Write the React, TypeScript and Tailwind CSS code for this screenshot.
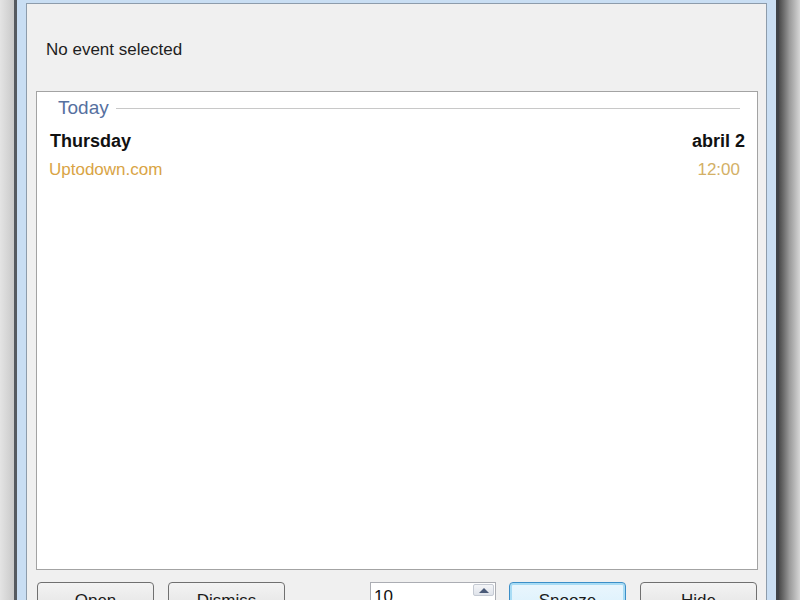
import React from 'react'

const font = { fontFamily: '"Liberation Sans", Arial, sans-serif' }

const Button = ({ label, focused = false, className = '' }: { label: string; focused?: boolean; className?: string }) => (
  <button
    className={
      'relative h-[34px] w-[117px] shrink-0 rounded-[4px] border text-[17px] leading-[20px] text-[#1a1a1a] ' +
      (focused
        ? 'border-[#3c8fc8] shadow-[inset_0_0_0_2px_#a8dcf5] bg-gradient-to-b from-[#eaf6fd] to-[#d9f0fc] '
        : 'border-[#707070] bg-gradient-to-b from-[#f3f3f3] to-[#e2e2e2] ') +
      className
    }
  >
    <span className="absolute left-0 right-0 top-[8px] text-center">{label}</span>
  </button>
)

export default function App() {
  return (
    <div className="flex h-[600px] w-[800px] overflow-hidden" style={font}>
      {/* desktop behind, left */}
      <div className="w-[14px] shrink-0 bg-gradient-to-r from-[#e4e4e4] to-[#c9c9c9]" />

      {/* window frame */}
      <div className="flex w-[765px] shrink-0 flex-col border-x-[3px] border-l-[#555a60] border-r-[#3f4348] bg-[#c9def3] px-[9px] pt-[3px]">
        <div className="flex flex-1 flex-col border border-b-0 border-[#8d9cab] bg-[#f0f0f0] pl-[9px] pr-[8px]">
          {/* header */}
          <div className="h-[87px] shrink-0 pl-[10px] pt-[36px] text-[17px] leading-[20px] text-[#1e1e1e]">
            No event selected
          </div>

          {/* reminder list */}
          <div className="h-[479px] shrink-0 border border-[#a3a3a3] bg-white">
            <div className="flex items-center pl-[21px] pr-[17px] pt-[6px]">
              <span className="text-[19px] leading-[20px] text-[#56709f]">Today</span>
              <div className="ml-[7px] h-px flex-1 bg-[#c8c8c8]" />
            </div>
            <div className="mt-[13px] flex justify-between pl-[13px] pr-[12px] text-[18px] font-bold leading-[20px] text-[#111]">
              <span>Thursday</span>
              <span>abril 2</span>
            </div>
            <div className="mt-[9px] flex justify-between pl-[12px] pr-[17px] text-[17px] leading-[20px]">
              <span className="text-[#d9a445]">Uptodown.com</span>
              <span className="text-[#d3b066]">12:00</span>
            </div>
          </div>

          {/* buttons */}
          <div className="mt-[12px] flex">
            <Button label="Open" className="ml-[1px]" />
            <Button label="Dismiss" className="ml-[14px]" />
            <div className="ml-[85px] flex h-[30px] w-[126px] shrink-0 border border-[#abadb3] bg-white">
              <span className="pl-[3px] pt-[4px] text-[17px] leading-[20px] text-[#111]">10</span>
              <div className="ml-auto mr-[1px] mt-[1px] flex h-[12px] w-[21px] items-center justify-center rounded-[2px] border border-[#c5cad3] bg-gradient-to-b from-[#f4f5f8] to-[#dfe3ea]">
                <div className="h-0 w-0 border-x-[5px] border-b-[5px] border-x-transparent border-b-[#4a5a78]" />
              </div>
            </div>
            <Button label="Snooze" focused className="ml-[13px]" />
            <Button label="Hide" className="ml-[14px]" />
          </div>
        </div>
      </div>

      {/* window shadow, right */}
      <div className="w-[21px] shrink-0 bg-gradient-to-r from-[#4a4a4a] via-[#9a9a9a] to-[#d6d6d6]" />
    </div>
  )
}
